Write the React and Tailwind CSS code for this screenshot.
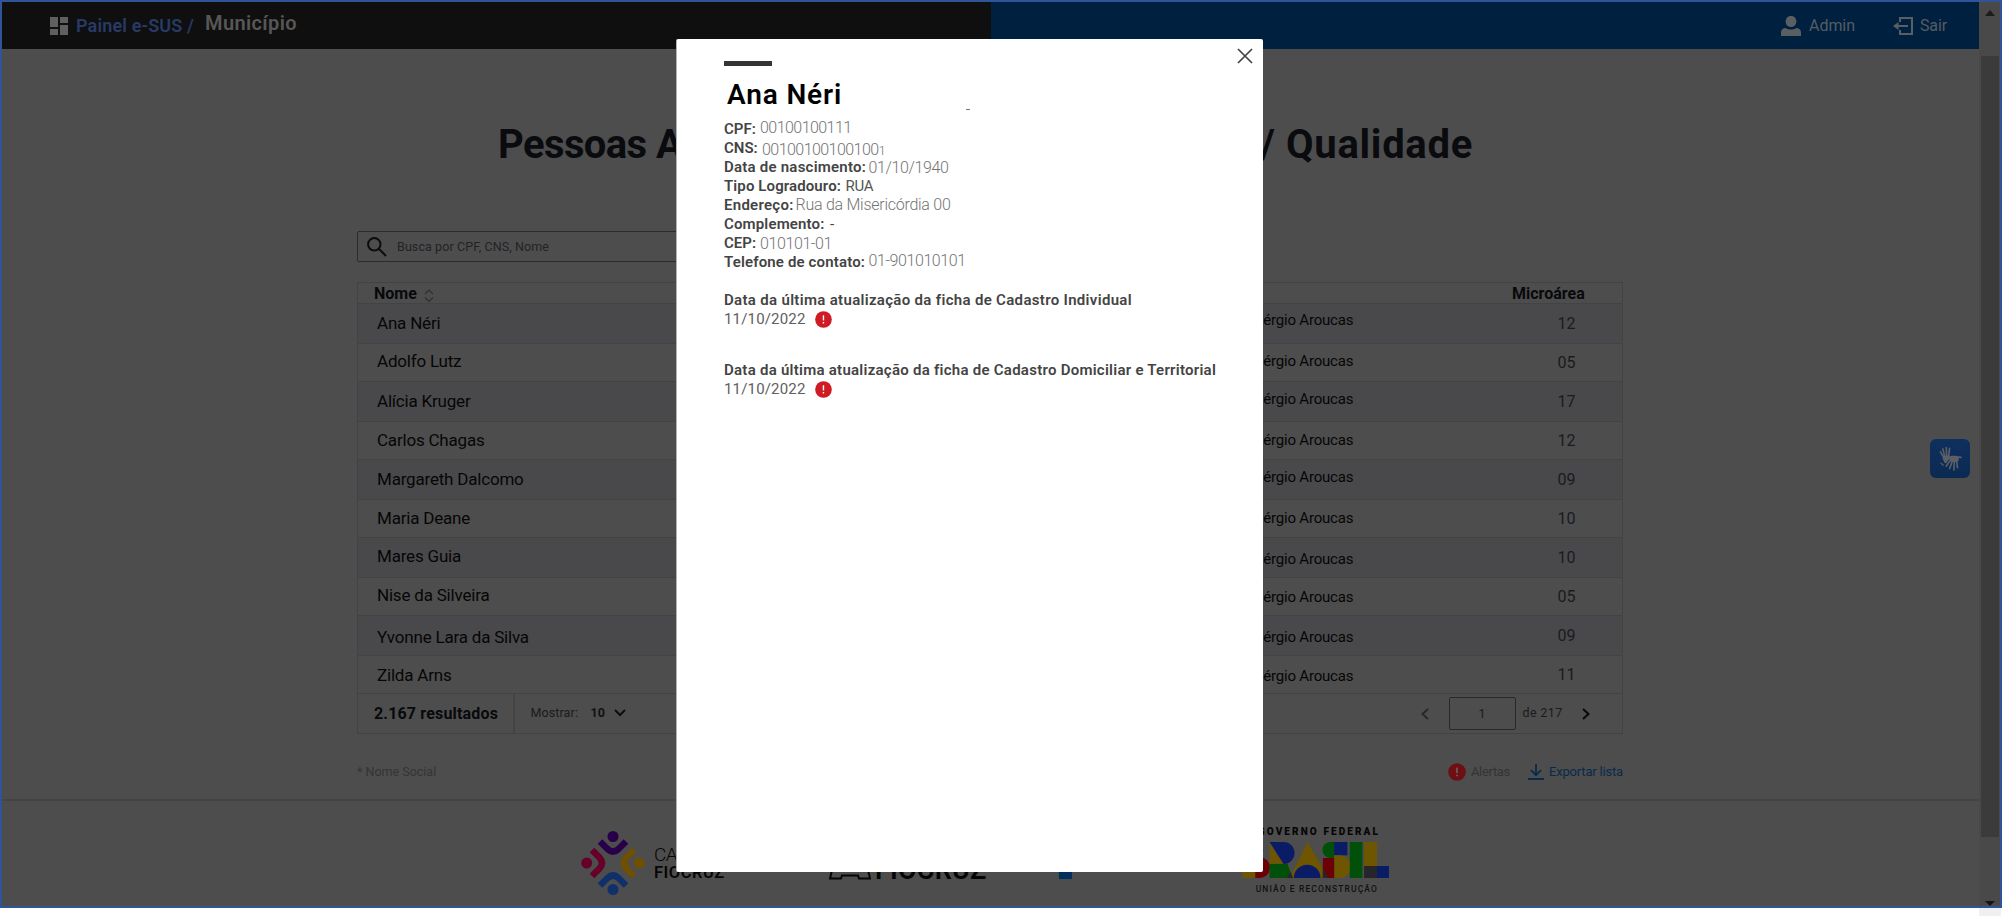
const rows = [
  { name: "Ana Néri", n: "12", h: "h-[40px]", a: "pt-[9px]", b: "pt-[6px]", c: "pt-[10px]" },
  { name: "Adolfo Lutz", n: "05", h: "h-[38px]", a: "pt-[7px]", b: "pt-[7px]", c: "pt-[9px]" },
  { name: "Alícia Kruger", n: "17", h: "h-[40px]", a: "pt-[9px]", b: "pt-[7px]", c: "pt-[10px]" },
  { name: "Carlos Chagas", n: "12", h: "h-[38px]", a: "pt-[8px]", b: "pt-[8px]", c: "pt-[9px]" },
  { name: "Margareth Dalcomo", n: "09", h: "h-[40px]", a: "pt-[9px]", b: "pt-[7px]", c: "pt-[10px]" },
  { name: "Maria Deane", n: "10", h: "h-[38px]", a: "pt-[8px]", b: "pt-[8px]", c: "pt-[9px]" },
  { name: "Mares Guia", n: "10", h: "h-[40px]", a: "pt-[8px]", b: "pt-[11px]", c: "pt-[10px]" },
  { name: "Nise da Silveira", n: "05", h: "h-[38px]", a: "pt-[7px]", b: "pt-[9px]", c: "pt-[9px]" },
  { name: "Yvonne Lara da Silva", n: "09", h: "h-[40px]", a: "pt-[11px]", b: "pt-[11px]", c: "pt-[10px]" },
  { name: "Zilda Arns", n: "11", h: "h-[38px]", a: "pt-[9px]", b: "pt-[10px]", c: "pt-[9px]" },
];

function AlertIcon({ className, fill, mark }) {
  return (
    <svg viewBox="0 0 18 18" className={className}>
      <circle cx="9" cy="9" r="8.8" fill={fill} />
      <rect x="8.2" y="4.6" width="1.5" height="5.4" fill={mark} />
      <rect x="8.2" y="11.6" width="1.5" height="1.6" fill={mark} />
    </svg>
  );
}

function Header() {
  return (
    <header className="flex h-[47px] shrink-0 whitespace-nowrap">
      <div className="flex w-[989px] items-center bg-[#0f0f0f] pl-[48px]">
        <svg viewBox="0 0 18 18" className="h-[18px] w-[18px]" fill="#606060">
          <rect x="0" y="0" width="8" height="10" />
          <rect x="10" y="0" width="8" height="6" />
          <rect x="0" y="12" width="8" height="6" />
          <rect x="10" y="8" width="8" height="10" />
        </svg>
        <span className="ml-[8px] w-[129px] text-[18px] font-semibold tracking-[0.14px] text-[#283a66]">Painel e-SUS /</span>
        <span className="pb-[6px] text-[20px] font-semibold tracking-[0.38px] text-[#575757]">Município</span>
      </div>
      <div className="flex flex-1 items-center bg-[#00203f] pl-[790px] text-[16px] text-[#555c63]">
        <svg viewBox="0 0 20 20" className="h-[20px] w-[20px]" fill="#5a5f64">
          <ellipse cx="10" cy="5.5" rx="5.4" ry="5.6" />
          <path d="M0 20v-3.5c0-3 2-4.6 4.6-4.6 1.6 1 3.4 1.500 5.400 1.500s3.800-.5 5.400-1.500c2.600 0 4.600 1.600 4.600 4.600V20z" />
        </svg>
        <span className="ml-[8px] w-[84px] tracking-[-0.04px]">Admin</span>
        <svg viewBox="0 0 20 18" className="h-[18px] w-[20px]" fill="none" stroke="#5a5f64" strokeWidth="2">
          <path d="M7 5V1h12v16H7v-4M3 9h12" />
          <path d="M5.500 5L0 9l5.500 4z" fill="#5a5f64" stroke="none" />
        </svg>
        <span className="ml-[7px] tracking-[-0.13px]">Sair</span>
      </div>
    </header>
  );
}

function Table() {
  return (
    <div className="mt-[20px] flex h-[452px] w-[1266px] flex-col border border-[#434343] whitespace-nowrap">
      <div className="flex h-[21px] shrink-0 items-start border-b border-[#434343] pl-[16px] text-[16px] leading-[20px] font-bold text-[#08090c]">
        <div className="flex w-[1138px] items-start pt-px">
          <span className="w-[50px]">Nome</span>
          <svg viewBox="0 0 10 13" className="mt-[5px] h-[13px] w-[10px]" fill="none" stroke="#2e3034" strokeWidth="1.200">
            <path d="M1 5l4-4 4 4M1 8.500l4 4 4-4" />
          </svg>
        </div>
        <span className="pt-px">Microárea</span>
      </div>
      {rows.map((r, i) => (
        <div
          key={r.name}
          className={`flex shrink-0 items-start border-b border-[#434343] pl-[19px] leading-[20px] ${r.h} ${i % 2 ? "" : "bg-[#49494b]"}`}
        >
          <span className={`w-[877.6px] text-[17px] tracking-[-0.2px] text-[#060606] ${r.a}`}>{r.name}</span>
          <span className={`w-[302.9px] text-[15px] tracking-[-0.2px] text-[#060606] ${r.b}`}>Sérgio Aroucas</span>
          <span className={`text-[16px] text-[#191b20] ${r.c}`}>{r.n}</span>
        </div>
      ))}
      <div className="flex flex-1 items-center text-[12.5px] text-[#191b1f]">
        <div className="flex h-full w-[156.5px] items-center border-r-2 border-[#444444] pl-[16px]">
          <span className="text-[16px] font-bold tracking-[0.17px] text-[#08090c]">2.167 resultados</span>
        </div>
        <span className="ml-[16px] w-[60px] tracking-[0.11px]">Mostrar:</span>
        <span className="w-[23px] font-bold text-[#101114]">10</span>
        <svg viewBox="0 0 12 8" className="mb-[2px] h-[8px] w-[12px]" fill="none" stroke="#0c0d10" strokeWidth="2">
          <path d="M1 1l5 5 5-5" />
        </svg>
        <div className="ml-[795px] flex items-center">
          <svg viewBox="0 0 8 12" className="h-[12px] w-[8px]" fill="none" stroke="#26282c" strokeWidth="2">
            <path d="M7 1L1.500 6 7 11" />
          </svg>
          <div className="ml-[20px] flex h-[33px] w-[67px] items-center justify-center rounded-[2px] border border-[#26282d] pt-px">1</div>
          <span className="ml-[7px] w-[59px] tracking-[0.36px]">de 217</span>
          <svg viewBox="0 0 8 12" className="h-[12px] w-[8px]" fill="none" stroke="#08090c" strokeWidth="2">
            <path d="M1 1l5.500 5L1 11" />
          </svg>
        </div>
      </div>
    </div>
  );
}

function CampusLogo() {
  return (
    <svg viewBox="0 0 64 64" className="h-[64px] w-[64px]" fill="none" strokeWidth="6.500">
      <g stroke="#28004a">
        <path d="M19 10.500l7.500 7.500q5.500 5 11 0l7.500-7.500" />
        <circle cx="32" cy="5.500" r="5.500" fill="#28004a" stroke="none" />
      </g>
      <g stroke="#6e5000">
        <path d="M53 19l-7.500 7.500q-5 5.500 0 11l7.500 7.500" />
        <circle cx="58.300" cy="32" r="5.500" fill="#6e5000" stroke="none" />
      </g>
      <g stroke="#10306c">
        <path d="M19 54.500l7.500-7.500q5.500-5 11 0l7.500 7.500" />
        <circle cx="32" cy="58.500" r="5.500" fill="#10306c" stroke="none" />
      </g>
      <g stroke="#660029">
        <path d="M11 19l7.500 7.500q5 5.500 0 11L11 45" />
        <circle cx="5.700" cy="32" r="5.500" fill="#660029" stroke="none" />
      </g>
    </svg>
  );
}

function BrasilLogo() {
  return (
    <svg viewBox="185 216 442 108" preserveAspectRatio="none" className="h-[36px] w-[147px]">
      <path d="M186 216h38v108h-38z" fill="#6e5500" />
      <path d="M224 216h6a26 26 0 0 1 0 50h-6z" fill="#0a1c66" />
      <path d="M225 262h14a30 31 0 0 1 0 62h-14z" fill="#6b0006" />
      <path d="M268 220v61h42z" fill="#6e5500" />
      <path d="M268 216h42a33 33 0 0 1 0 66z" fill="#0a1c66" />
      <path d="M268 282h54l15 42h-69z" fill="#00500a" />
      <path d="M382 216l63 108H328z" fill="#6e5500" />
      <path d="M331 306l8 18h-20z" fill="#26262a" />
      <path d="M341 324a40 40 0 0 1 80 0z" fill="#0a1c66" />
      <path d="M462 216v48h-11a24 24 0 0 1 0-48z" fill="#00500a" />
      <path d="M462 216h40v40h-40z" fill="#0a1c66" />
      <path d="M462 256h16a34 34 0 0 1 0 68h-16z" fill="#6e5500" />
      <path d="M428 264h34v60h-34z" fill="#6b0006" />
      <path d="M428 294l17 30h-17z" fill="#26262a" />
      <path d="M509 216h38v108h-38z" fill="#00500a" />
      <path d="M552 216h39v72h-39z" fill="#6e5500" />
      <path d="M552 288h39v36h-39z" fill="#26262a" />
      <path d="M591 288h36v36h-36z" fill="#0a1c66" />
    </svg>
  );
}

function Footer() {
  return (
    <footer className="flex h-[107px] items-start border-t-2 border-[#444444] pl-[579px] whitespace-nowrap text-[#060606]">
      <div className="pt-[30px]">
        <CampusLogo />
      </div>
      <div className="ml-[9px] flex w-[175px] flex-col pt-[44px]">
        <span className="text-[19px] leading-[20px] font-light tracking-[-0.5px]">CA</span>
        <span className="text-[16.500px] leading-[16px] font-semibold tracking-[0.5px]">FIOCRUZ</span>
      </div>
      <svg viewBox="0 0 42 30" className="mt-[49px] h-[30px] w-[42px]" fill="none" stroke="#060606" strokeWidth="2">
        <path d="M3 20L1 28.500h11l1-3h16l1 3h11L39 20V4H3z" />
      </svg>
      <span className="mt-[53px] ml-[4px] w-[183px] text-[27px] leading-[32px] font-semibold tracking-[0.2px]">FIOCRUZ</span>
      <svg viewBox="0 0 14 30" className="mt-[49px] h-[30px] w-[14px]" fill="#00305c">
        <path d="M0 0h14v29H1z" />
      </svg>
      <div className="ml-[170px] flex w-[147px] flex-col pt-[25px]">
        <span className="self-end pr-[9px] text-[10px] leading-[12px] font-black tracking-[2.1px]">GOVERNO FEDERAL</span>
        <div className="mt-[4px]">
          <BrasilLogo />
        </div>
        <span className="mt-[5px] self-end pr-[11px] text-[8.500px] leading-[12px] font-medium tracking-[1.1px] text-[#101010]">UNIÃO E RECONSTRUÇÃO</span>
      </div>
    </footer>
  );
}

function Scrollbar() {
  return (
    <div className="flex w-[21px] shrink-0 flex-col items-center bg-[#494949]">
      <svg viewBox="0 0 10 6" className="mt-[8px] h-[6px] w-[10px]" fill="#1c1c1c">
        <path d="M5 0l5 6H0z" />
      </svg>
      <div className="mt-[40px] h-[781px] w-[18px] bg-[#3b3b3b]" />
      <svg viewBox="0 0 10 5" className="mt-auto h-[5px] w-[10px]" fill="#141414">
        <path d="M0 0h10L5 5z" />
      </svg>
    </div>
  );
}

const value = "text-[16px] font-light text-[#747474]";

function Field({ label, width, children }) {
  return (
    <div className="flex h-[19px] items-start">
      <span className={`font-semibold ${width}`}>{label}</span>
      {children}
    </div>
  );
}

function Modal() {
  return (
    <div className="absolute top-[39px] left-[676px] flex h-[833px] w-[587px] flex-col rounded-[2px] border-l border-[#b4b4b4] bg-white pt-[22px] pl-[47px] text-[15px] leading-[19px] whitespace-nowrap text-[#444444]">
      <svg viewBox="0 0 16 16" className="absolute top-[9px] right-[10px] h-[16px] w-[16px]" stroke="#444444" strokeWidth="1.700" fill="none">
        <path d="M1 1l14 14M15 1L1 15" />
      </svg>
      <div className="h-[5px] w-[48px] bg-[#343434]" />
      <div className="mt-[13px] flex h-[31px] items-end pl-[3px]">
        <h2 className="w-[239px] text-[28px] leading-[30px] font-semibold tracking-[0.85px] text-black">Ana Néri</h2>
        <div className="h-px w-[4px] bg-[#777777]" />
      </div>
      <div className="mt-[10px]">
        <Field label="CPF:" width="w-[36px]">
          <span className={`mt-[-2px] tracking-[-0.55px] ${value}`}>00100100111</span>
        </Field>
        <Field label="CNS:" width="w-[38px]">
          <span className={`mt-px tracking-[-0.55px] ${value}`}>
            00100100100100<span className="text-[13px]">1</span>
          </span>
        </Field>
        <Field label="Data de nascimento:" width="w-[144.500px] tracking-[0.23px]">
          <span className={`tracking-[-0.37px] ${value}`}>01/10/1940</span>
        </Field>
        <Field label="Tipo Logradouro:" width="w-[121.500px] tracking-[0.11px]">
          <span className="tracking-[-0.3px] text-[#555555]">RUA</span>
        </Field>
        <Field label="Endereço:" width="w-[71.500px] tracking-[0.27px]">
          <span className={`mt-[-1px] tracking-[-0.26px] ${value}`}>Rua da Misericórdia 00</span>
        </Field>
        <Field label="Complemento:" width="w-[106px] tracking-[0.15px]">
          <span>-</span>
        </Field>
        <Field label="CEP:" width="w-[36px]">
          <span className={`tracking-[-0.4px] ${value}`}>010101-01</span>
        </Field>
        <Field label="Telefone de contato:" width="w-[144.500px] tracking-[0.15px]">
          <span className={`mt-[-2px] tracking-[-0.42px] ${value}`}>01-901010101</span>
        </Field>
      </div>
      <div className="mt-[19px] font-semibold tracking-[0.32px]">Data da última atualização da ficha de Cadastro Individual</div>
      <div className="flex items-center text-[#606060]">
        <span className="w-[91px] tracking-[0.17px]">11/10/2022</span>
        <AlertIcon className="h-[17px] w-[17px]" fill="#d01b25" mark="#ffffff" />
      </div>
      <div className="mt-[32px] font-semibold tracking-[0.26px]">Data da última atualização da ficha de Cadastro Domiciliar e Territorial</div>
      <div className="flex items-center text-[#606060]">
        <span className="w-[91px] tracking-[0.17px]">11/10/2022</span>
        <AlertIcon className="h-[17px] w-[17px]" fill="#d01b25" mark="#ffffff" />
      </div>
    </div>
  );
}

function SignLanguageButton() {
  return (
    <div className="absolute top-[439px] left-[1930px] flex h-[39px] w-[40px] items-center justify-center rounded-[6px] bg-linear-to-b from-[#0e305e] to-[#0b2a52]">
      <svg viewBox="0 0 24 26" className="h-[25px] w-[23px]" fill="none" stroke="#5c6066" strokeWidth="1.700" strokeLinecap="round" strokeLinejoin="round">
        <path d="M5 12L1.500 6M6 11L4 3M8 10.500L7.600 1.500M10 11.500L11 2.500" />
        <path d="M5.500 12.500l1.500 3.500M8 11.500l1 2" strokeWidth="3.600" />
        <path d="M14 13.500h3.500" strokeWidth="6.500" />
        <path d="M12 11.500H8.500M11 16l-3.500 5M13.500 17l-2.500 6.500M16 17l-.5 8M18.500 16.500l.8 6M20 11.500l3 .3" />
        <path d="M2 18l2.500 2" strokeWidth="1.300" />
      </svg>
    </div>
  );
}

export default function App() {
  return (
    <div className="relative flex h-[916px] w-[2002px] flex-col overflow-hidden bg-white font-['Roboto',sans-serif]">
      <div className="flex h-[908px] shrink-0 border-2 border-[#30549a] bg-[#4d4d4d]">
        <main className="flex min-w-0 flex-1 flex-col">
          <Header />
          <div className="flex flex-col pt-[72px] pl-[355px]">
            <h1 className="ml-[141px] flex w-[975px] justify-between text-[40px] leading-[48px] font-bold whitespace-nowrap text-[#0a0b0e]">
              <span className="tracking-[-0.6px]">Pessoas A</span>
              <span className="tracking-[0.7px]">/ Qualidade</span>
            </h1>
            <div className="mt-[62px] flex h-[31px] w-[500px] items-center rounded-[2px] border border-[#2b2c31] pl-[9px]">
              <svg viewBox="0 0 20 20" className="h-[20px] w-[20px]" fill="none" stroke="#0c0c0e" strokeWidth="2">
                <circle cx="7.300" cy="7.300" r="6.200" />
                <path d="M11.800 11.800L19 19" />
              </svg>
              <span className="ml-[10px] pt-px text-[12.500px] tracking-[0.09px] text-[#222327]">Busca por CPF, CNS, Nome</span>
            </div>
            <Table />
            <div className="mt-[28px] flex h-[20px] w-[1266px] items-center text-[13px] whitespace-nowrap">
              <span className="w-[1091px] text-[12.500px] text-[#333438]">* Nome Social</span>
              <AlertIcon className="h-[18px] w-[18px]" fill="#6e0f15" mark="#6e6668" />
              <span className="ml-[5px] w-[57px] tracking-[-0.33px] text-[#333438]">Alertas</span>
              <svg viewBox="0 0 16 16" className="h-[16px] w-[16px]" fill="none" stroke="#0a2a4c" strokeWidth="1.800">
                <path d="M8 0v11M3 6.200l5 5 5-5M0 15h16" />
              </svg>
              <span className="ml-[5px] tracking-[-0.18px] text-[#0a2a4c]">Exportar lista</span>
            </div>
          </div>
          <div className="mt-[17px]">
            <Footer />
          </div>
        </main>
        <Scrollbar />
      </div>
      <div className="flex flex-1 justify-end pr-px">
        <div className="w-[22px] bg-[#f0f0f0]" />
      </div>
      <SignLanguageButton />
      <Modal />
    </div>
  );
}
